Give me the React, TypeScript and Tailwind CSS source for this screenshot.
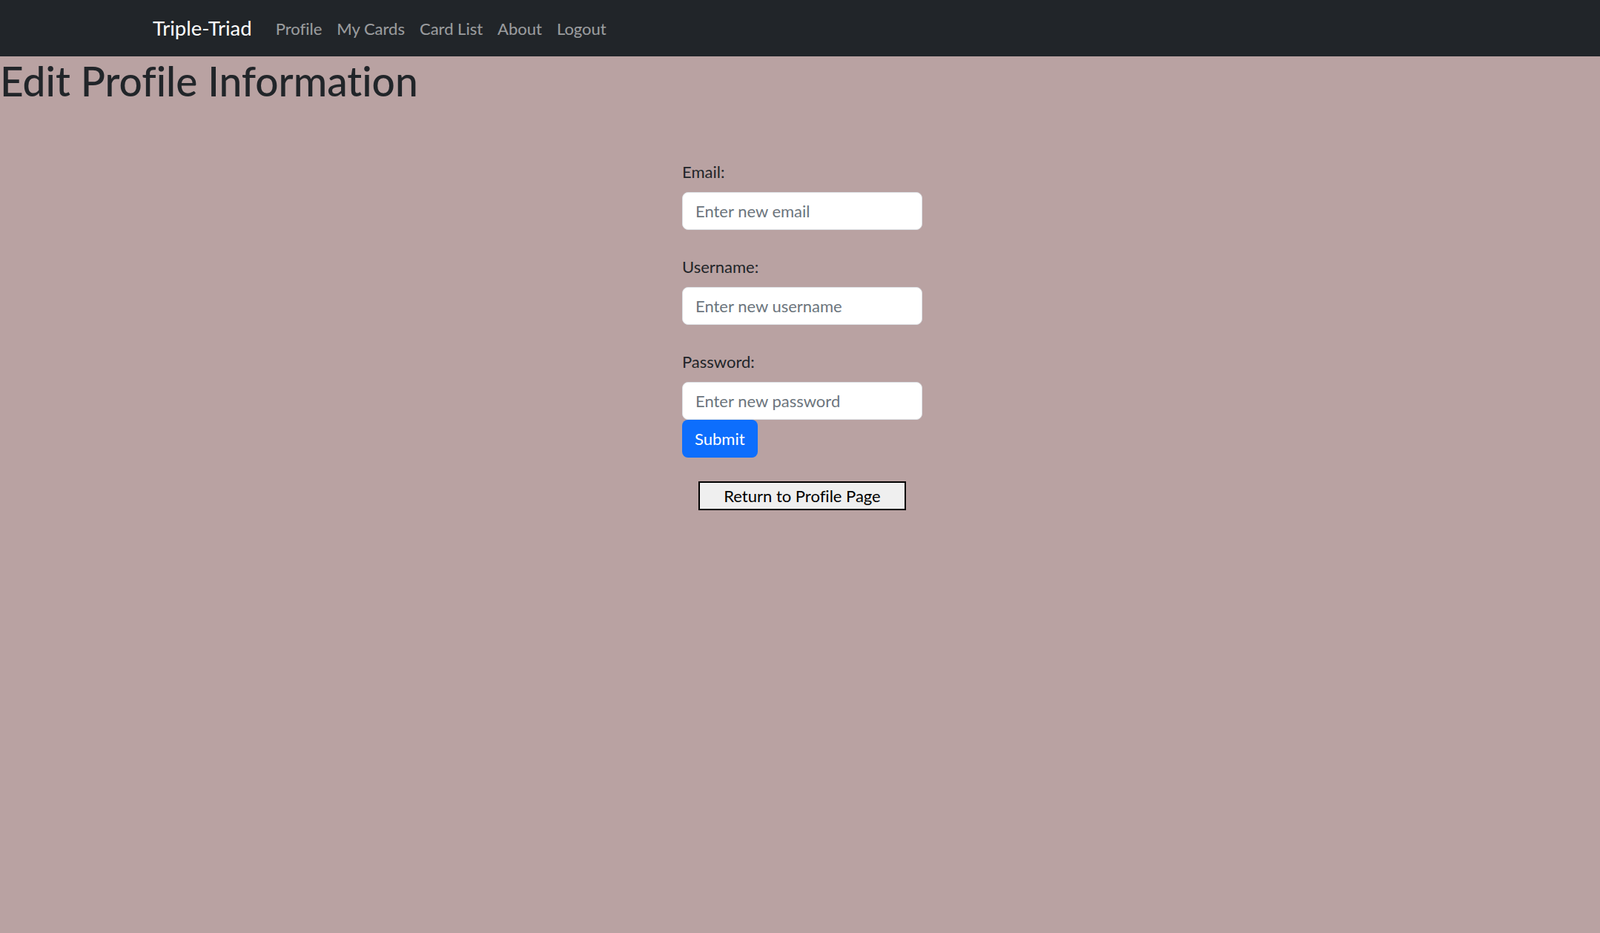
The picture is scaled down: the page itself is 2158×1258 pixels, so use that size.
import React from "react";

const NAV_LINKS = ["Profile", "My Cards", "Card List", "About", "Logout"];

const FIELDS = [
  { label: "Email:", placeholder: "Enter new email", type: "email" },
  { label: "Username:", placeholder: "Enter new username", type: "text" },
  { label: "Password:", placeholder: "Enter new password", type: "password" },
];

function Navbar() {
  return (
    <nav className="h-[76px] bg-[#212529] flex items-center pl-[206px]">
      <a href="#" className="text-white text-[27.5px] leading-[1.5] mr-[22px]">
        Triple-Triad
      </a>
      <ul className="flex items-center">
        {NAV_LINKS.map((link) => (
          <li key={link}>
            <a href="#" className="block px-[10px] text-[22px] leading-[1.5] text-white/55">
              {link}
            </a>
          </li>
        ))}
      </ul>
    </nav>
  );
}

export default function App() {
  return (
    <div
      className="min-h-[1258px] bg-[#b9a2a2] text-[#212529] [font-variant-ligatures:none]"
      style={{ fontFamily: 'Lato, "Noto Sans", sans-serif' }}
    >
      <Navbar />
      <h1 className="text-[55px] leading-[66px] font-medium m-0">Edit Profile Information</h1>

      <div className="flex flex-col items-center pt-[73px] pl-[6px]">
        <form className="w-[324px] flex flex-col" onSubmit={(e) => e.preventDefault()}>
          {FIELDS.map((f, i) => (
            <div key={f.label} className={i > 0 ? "mt-[33px]" : ""}>
              <label className="block text-[22px] leading-[33px] mb-[11px]">{f.label}</label>
              <input
                type={f.type}
                placeholder={f.placeholder}
                className="block w-full h-[51px] px-[17px] text-[22px] bg-white border border-[#dee2e6] rounded-[8px] outline-none placeholder:text-[#6c757d]"
              />
            </div>
          ))}
          <div>
            <button
              type="submit"
              className="h-[51px] px-[17px] text-[22px] text-white bg-[#0d6efd] rounded-[8px]"
            >
              Submit
            </button>
          </div>
        </form>

        <button className="mt-[32px] h-[39px] w-[280px] text-[22px] leading-none text-black bg-[#efefef] border-2 border-black">
          Return to Profile Page
        </button>
      </div>
    </div>
  );
}
